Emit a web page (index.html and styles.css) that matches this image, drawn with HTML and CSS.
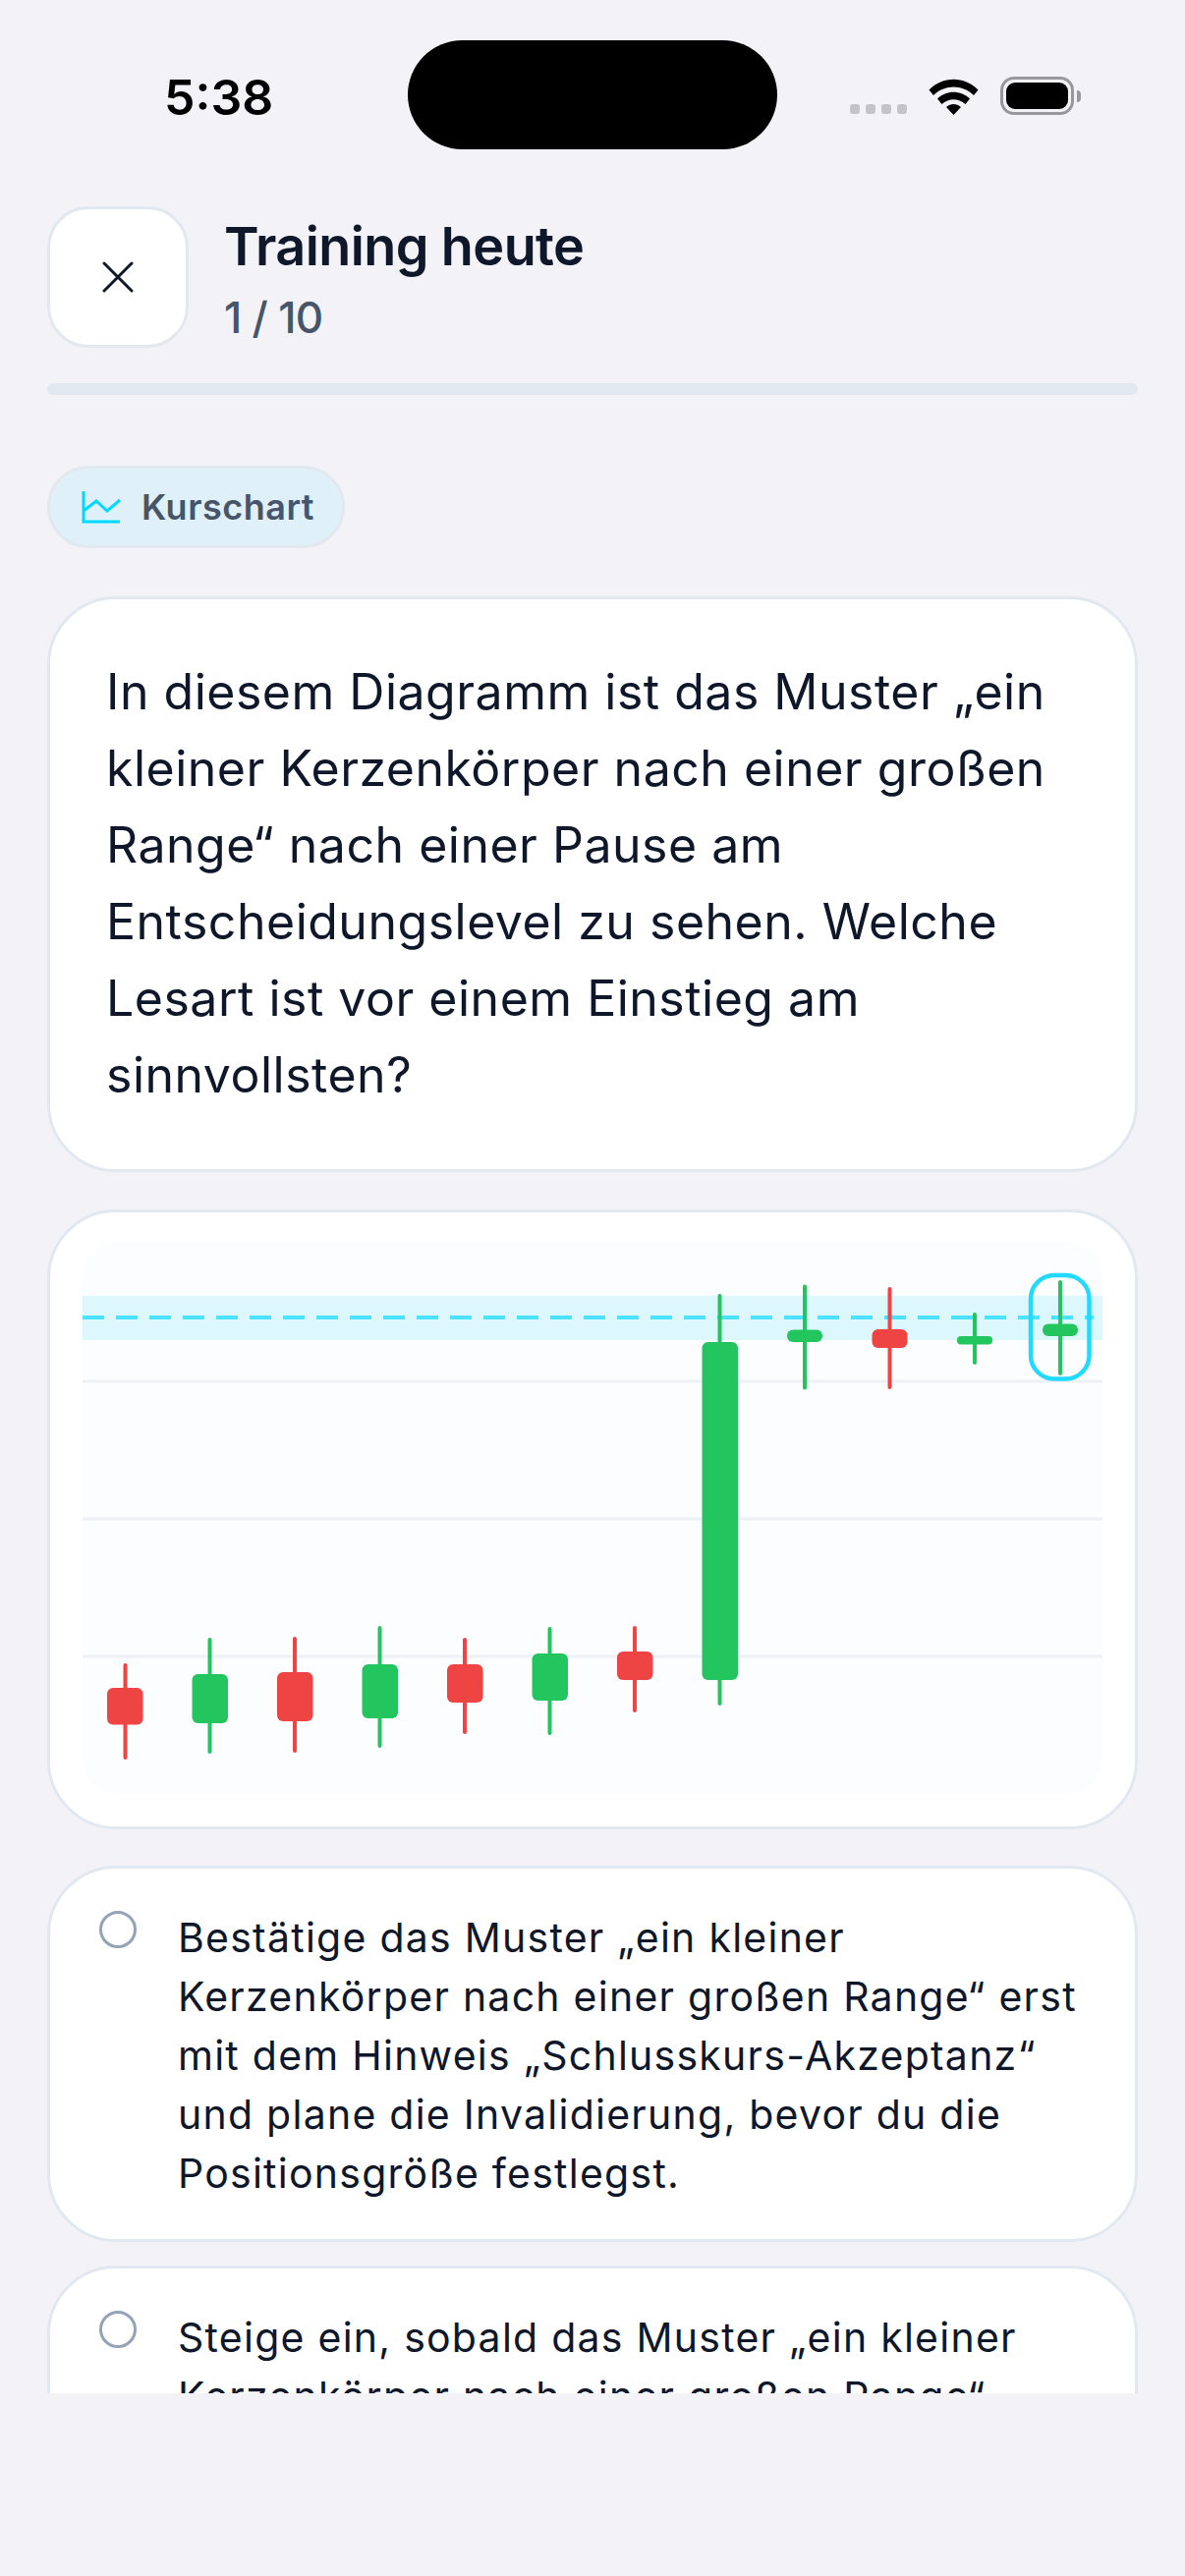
FILE: index.html
```html
<!DOCTYPE html>
<html lang="de">
<head>
    <meta charset="UTF-8">
    <meta name="viewport" content="width=device-width, initial-scale=1.0">
    <title>Training heute</title>
    <link rel="stylesheet" href="styles.css">
</head>
<body>
    <div class="status-bar">
        <div class="time">5:38</div>
        <div class="island"></div>
        <div class="status-icons">
            <div class="signal"><i></i><i></i><i></i><i></i></div>
            <svg class="wifi" width="51" height="37" viewBox="0 0 51 37">
                <path d="M0.5 11.5 C14.5 -3 36.5 -3 50.5 11.5 L46 17 C34.5 5.5 16.5 5.5 5 17 Z" fill="#000"/>
                <path d="M9 20.5 C18 11.5 33 11.5 42 20.5 L37.5 26 C30.5 19.5 20.5 19.5 13.5 26 Z" fill="#000"/>
                <path d="M18 29 C22.5 25 28.5 25 33 29 L25.5 37 Z" fill="#000"/>
            </svg>
            <div class="battery"><div class="battery-fill"></div></div>
            <div class="battery-nub"></div>
        </div>
    </div>

    <div class="header">
        <button class="close-btn">
            <svg width="32" height="32" viewBox="0 0 32 32">
                <path d="M2 2 L30 30 M30 2 L2 30" stroke="#0f172a" stroke-width="3" stroke-linecap="round"/>
            </svg>
        </button>
        <div class="header-text">
            <div class="title">Training heute</div>
            <div class="count">1 / 10</div>
        </div>
    </div>
    <div class="progress"></div>

    <div class="content">
        <div class="pill">
            <svg width="40" height="34" viewBox="0 0 40 34">
                <path d="M2 1 V32 H39 M2 21 L15 11 L26 21 L39 10" fill="none" stroke="#00d9ff" stroke-width="3"/>
            </svg>
            <span>Kurschart</span>
        </div>

        <div class="card question">In diesem Diagramm ist das Muster „ein kleiner Kerzenkörper nach einer großen Range“ nach einer Pause am Entscheidungslevel zu sehen. Welche Lesart ist vor einem Einstieg am sinnvollsten?</div>

        <div class="card chart-card">
            <svg class="chart" width="1038" height="562" viewBox="84 1264 1038 562">
                <rect x="84" y="1264" width="1038" height="562" rx="36" fill="#fcfdfe"/>
                <rect x="84" y="1319" width="1038" height="45" fill="#ddf8fc"/>
                <path d="M84 1406 H1122 M84 1546 H1122 M84 1686 H1122" stroke="#edf1f6" stroke-width="3"/>
                <path d="M84 1341 H1113" stroke="#4be3ff" stroke-width="4" stroke-dasharray="22 12"/>

                <g fill="#ef4444">
                    <rect x="125.5" y="1693" width="4" height="98" rx="2"/>
                    <rect x="109" y="1718" width="36.5" height="37.5" rx="6"/>
                    <rect x="298" y="1666" width="4" height="118" rx="2"/>
                    <rect x="282" y="1702" width="36.5" height="50" rx="6"/>
                    <rect x="471" y="1667" width="4" height="98" rx="2"/>
                    <rect x="455" y="1694" width="36.5" height="39" rx="6"/>
                    <rect x="644" y="1655" width="4" height="88" rx="2"/>
                    <rect x="628" y="1681" width="36.5" height="29" rx="6"/>
                    <rect x="903.5" y="1310" width="4" height="104" rx="2"/>
                    <rect x="887.5" y="1353" width="36" height="19" rx="6"/>
                </g>
                <g fill="#22c55e">
                    <rect x="211.5" y="1667" width="4" height="118" rx="2"/>
                    <rect x="195.5" y="1704" width="36.5" height="50" rx="6"/>
                    <rect x="384.5" y="1655" width="4" height="124" rx="2"/>
                    <rect x="368.5" y="1694" width="36.5" height="55" rx="6"/>
                    <rect x="557.5" y="1656" width="4" height="110" rx="2"/>
                    <rect x="541.5" y="1683" width="36.5" height="48" rx="6"/>
                    <rect x="730.5" y="1317" width="4" height="419" rx="2"/>
                    <rect x="714.5" y="1366" width="36.5" height="344" rx="6"/>
                    <rect x="817" y="1307.500" width="4" height="107" rx="2"/>
                    <rect x="801" y="1353.500" width="36" height="12.500" rx="6"/>
                    <rect x="990" y="1336" width="4" height="53" rx="2"/>
                    <rect x="974" y="1360" width="36" height="8.500" rx="4"/>
                    <rect x="1077" y="1303" width="4" height="97" rx="2"/>
                    <rect x="1061" y="1347.500" width="36" height="12.500" rx="6"/>
                </g>
                <rect x="1049" y="1298" width="59.500" height="105.500" rx="24" fill="none" stroke="#22d9ff" stroke-width="4.500"/>
            </svg>
        </div>

        <div class="card option">
            <div class="radio"></div>
            <div class="option-text">Bestätige das Muster „ein kleiner Kerzenkörper nach einer großen Range“ erst mit dem Hinweis „Schlusskurs-Akzeptanz“ und plane die Invalidierung, bevor du die Positionsgröße festlegst.</div>
        </div>
        <div class="card option">
            <div class="radio"></div>
            <div class="option-text">Steige ein, sobald das Muster „ein kleiner Kerzenkörper nach einer großen Range“ sichtbar ist, und setze den Stopp später.</div>
        </div>
    </div>
</body>
</html>
```

FILE: styles.css
```css
* {
    box-sizing: border-box;
}
body {
    margin: 0;
    height: 2622px;
    overflow: hidden;
    font-family: Inter, "Noto Sans", sans-serif;
    background-color: #f2f2f7;
    color: #0f172a;
}
.status-bar {
    display: flex;
    align-items: flex-start;
    height: 210px;
    padding: 41px 0 0 167px;
}
.time {
    width: 248px;
    margin-top: 30px;
    font-size: 50px;
    line-height: 56px;
    font-weight: 600;
    color: #000;
}
.island {
    width: 376px;
    height: 111px;
    border-radius: 56px;
    background: #000;
}
.status-icons {
    display: flex;
    align-items: flex-end;
    margin: 37px 0 0 74px;
}
.signal {
    display: flex;
    gap: 6px;
    margin-bottom: 1px;
    margin-right: 22px;
}
.signal i {
    width: 10px;
    height: 10px;
    border-radius: 3px;
    background: #c3c3c8;
}
.wifi {
    margin-right: 22px;
}
.battery {
    width: 75px;
    height: 39px;
    padding: 3px;
    border: 3px solid #98989c;
    border-radius: 14px;
}
.battery-fill {
    height: 100%;
    border-radius: 9px;
    background: #000;
}
.battery-nub {
    width: 4px;
    height: 12px;
    margin: 0 0 13px 3px;
    border-radius: 0 4px 4px 0;
    background: #98989c;
}
.header {
    display: flex;
    gap: 36px;
    padding: 0 48px;
}
.close-btn {
    display: flex;
    align-items: center;
    justify-content: center;
    width: 144px;
    height: 144px;
    padding: 0;
    border: 3px solid #e2e8f0;
    border-radius: 42px;
    background: #fff;
}
.header-text {
    padding-top: 9px;
}
.title {
    font-size: 54px;
    line-height: 64px;
    font-weight: 600;
    letter-spacing: -0.6px;
}
.count {
    margin-top: 14px;
    font-size: 44px;
    line-height: 52px;
    font-weight: 500;
    letter-spacing: -0.7px;
    color: #475569;
}
.progress {
    height: 12px;
    margin: 36px 48px 0;
    border-radius: 6px;
    background: #e2e8f0;
}
.content {
    display: flex;
    flex-direction: column;
    align-items: stretch;
    height: 2034px;
    padding: 72px 48px 0;
    overflow: hidden;
}
.pill {
    display: flex;
    align-items: center;
    align-self: flex-start;
    flex-shrink: 0;
    gap: 21px;
    height: 84px;
    padding: 0 28px 0 32px;
    border: 3px solid #e2e8f0;
    border-radius: 42px;
    background: #dff0f8;
    font-size: 36px;
    font-weight: 600;
    letter-spacing: 0.5px;
    color: #475569;
}
.card {
    flex-shrink: 0;
    border: 3px solid #e2e8f0;
    background: #fff;
}
.question {
    margin-top: 49px;
    padding: 55px 57px 57px;
    border-radius: 70px;
    font-size: 50px;
    line-height: 78px;
    letter-spacing: 0.5px;
}
.chart-card {
    margin-top: 38px;
    padding: 30px 33px 33px;
    border-radius: 70px;
}
.chart {
    display: block;
}
.option {
    display: flex;
    gap: 42px;
    margin-top: 37px;
    padding: 43px 38px 40px 50px;
    border-radius: 70px;
    font-size: 41px;
    line-height: 60px;
    letter-spacing: 1.25px;
}
.option + .option {
    margin-top: 24px;
}
.radio {
    flex-shrink: 0;
    width: 38px;
    height: 38px;
    border: 3px solid #94a3b8;
    border-radius: 50%;
}
.option-text {
    margin-top: -3px;
    margin-bottom: -3px;
}
```
